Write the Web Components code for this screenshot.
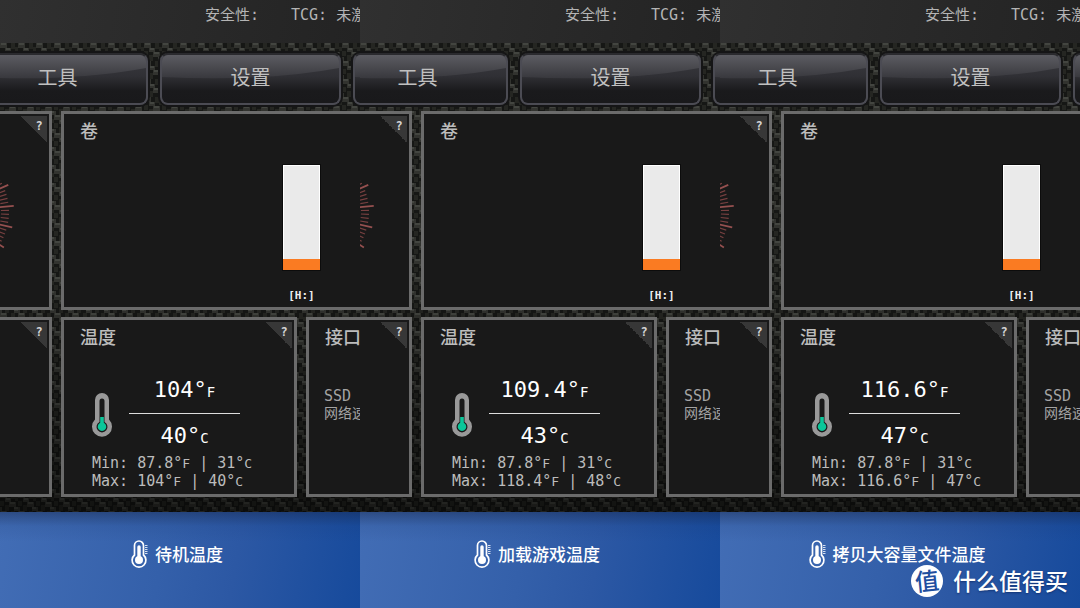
<!DOCTYPE html>
<html lang="zh-CN">
<head>
<meta charset="utf-8">
<meta name="viewport" content="width=device-width, initial-scale=1">
<title>SSD 温度对比</title>
<style>
html,body{height:100%}
body{margin:0;background:#1b1b1b;font-family:"DejaVu Sans Mono","Noto Sans CJK SC",monospace;color:#c4c4c4}
</style>
</head>
<body>
<temp-compare>
<drive-pane label="待机温度" f="104" c="40" minf="87.8" minc="31" maxf="104" maxc="40"></drive-pane>
<drive-pane label="加载游戏温度" f="109.4" c="43" minf="87.8" minc="31" maxf="118.4" maxc="48"></drive-pane>
<drive-pane label="拷贝大容量文件温度" f="116.6" c="47" minf="87.8" minc="31" maxf="116.6" maxc="47"></drive-pane>
</temp-compare>
<script>
class TempCompare extends HTMLElement{
  constructor(){
    super();
    this.attachShadow({mode:'open'}).innerHTML=`
<style>
:host{display:grid;grid-template-columns:repeat(3,minmax(0,1fr));min-height:100%;position:relative;overflow:hidden}
site-mark{position:absolute;right:12px;bottom:11px}
</style>
<slot></slot><site-mark></site-mark>`;
  }
}
customElements.define('temp-compare',TempCompare);

class SiteMark extends HTMLElement{
  constructor(){
    super();
    this.attachShadow({mode:'open'}).innerHTML=`
<style>
:host{display:flex;align-items:flex-start;height:32px;gap:10px;color:#fff;font:500 23px/30px "Noto Sans CJK SC",sans-serif;text-shadow:0 1px 2px rgba(0,20,70,.5)}
b{width:32px;height:32px;border-radius:50%;background:#fff;color:#1f4f9f;font-size:24px;line-height:30px;font-weight:500;text-align:center;text-shadow:none}
b span{display:block;transform:rotate(-6deg)}
</style>
<b><span>值</span></b><span>什么值得买</span>`;
  }
}
customElements.define('site-mark',SiteMark);

class GlossButton extends HTMLElement{
  constructor(){
    super();
    this.attachShadow({mode:'open'}).innerHTML=`
<style>
:host{display:block;flex:0 0 181px}
button{position:relative;overflow:hidden;display:block;width:100%;height:52px;padding:0 0 4px;border:2px solid #4b4b53;border-top-color:#2a2a2e;border-radius:8px;
background:linear-gradient(#3c3c41,#2f2f34 45%,#1a1a1c 75%,#19191b);box-shadow:0 0 0 2px #151516;color:#c0c0c0;font:400 20px/44px "Noto Sans CJK SC",sans-serif}
svg{position:absolute;left:0;top:0;width:100%;height:24px}
span{position:relative}
</style>
<button type="button"><svg viewBox="0 0 180 24" preserveAspectRatio="none" aria-hidden="true"><defs><linearGradient id="g" x1="0" y1="0" x2="0" y2="1"><stop offset="0" stop-color="#5c5c62"/><stop offset="1" stop-color="#38383d"/></linearGradient></defs><path d="M0 0H180V13Q105 27 0 22Z" fill="url(#g)"/></svg><span><slot></slot></span></button>`;
  }
}
customElements.define('gloss-button',GlossButton);

class InfoCard extends HTMLElement{
  constructor(){
    super();
    this.attachShadow({mode:'open'}).innerHTML=`
<style>
:host{display:block;box-sizing:border-box;position:relative;min-width:0;border:3px solid #6b6b6b;background:#191919;overflow:hidden}
h2{margin:0;padding:4px 16px 0;font:500 18px/24px "Noto Sans CJK SC",sans-serif;color:#bcbcbc;white-space:nowrap}
button{position:absolute;right:2px;top:2px;width:27px;height:27px;padding:0 4px 8px 15px;border:0;background:linear-gradient(225deg,#373737 50%,transparent 50%);color:#d4d4d4;font:700 12px/16px "DejaVu Sans Mono",monospace}
</style>
<h2></h2><button type="button" aria-label="帮助">?</button><slot></slot>`;
  }
  connectedCallback(){
    const h=this.shadowRoot.querySelector('h2');
    if(this.hasAttribute('heading'))h.textContent=this.getAttribute('heading');else h.remove();
    if(this.hasAttribute('nohelp'))this.shadowRoot.querySelector('button').remove();
  }
}
customElements.define('info-card',InfoCard);

class DialTicks extends HTMLElement{
  constructor(){
    super();
    let lines='';
    for(let i=-2;i<=15;i++){
      const major=i%5===0,a=(-23.9+i*3.72)*Math.PI/180,r0=major?52:54,r1=major?67:62;
      lines+=`<path d="M${-53+r0*Math.cos(a)} ${51+r0*Math.sin(a)}L${-53+r1*Math.cos(a)} ${51+r1*Math.sin(a)}" stroke="${major?'#95504f':'#784040'}" stroke-width="${major?1.7:1.2}"/>`;
    }
    this.attachShadow({mode:'open'}).innerHTML=`<style>:host{display:block}svg{display:block}</style><svg width="20" height="100" viewBox="0 0 20 100" aria-hidden="true">${lines}</svg>`;
  }
}
customElements.define('dial-ticks',DialTicks);

class VolumeBar extends HTMLElement{
  constructor(){
    super();
    this.attachShadow({mode:'open'}).innerHTML=`
<style>
:host{display:flex;flex-direction:column;align-items:center;width:37px}
.bar{display:flex;flex-direction:column;width:37px;height:105px;outline:1px solid #0c0c0c}
.free{flex:1;background:#eaeaea;border:1px solid #fff;border-bottom:0}
.used{height:11px;background:#fa7b22}
span{margin-top:18px;font:700 11px/16px "DejaVu Sans Mono",monospace;color:#eee;white-space:nowrap}
</style>
<div class="bar"><div class="free"></div><div class="used"></div></div><span><slot></slot></span>`;
  }
}
customElements.define('volume-bar',VolumeBar);

class TempReadout extends HTMLElement{
  constructor(){super();this.attachShadow({mode:'open'})}
  connectedCallback(){
    const v=n=>this.getAttribute(n);
    this.shadowRoot.innerHTML=`
<style>
:host{display:block;padding:27px 0 0 28px;white-space:nowrap}
.now{display:flex;align-items:center;gap:17px}
.vals{width:111px;text-align:center;color:#fff;font-size:22px;line-height:30px;display:flex;flex-direction:column;align-items:center}
.vals div{height:30px}
.f{padding-bottom:8px}
.c{border-top:1px solid #ddd;width:100%;padding-top:7px}
.now small{font-size:14px}
.range{margin-top:3px;padding-left:0;font-size:15px;line-height:18px;color:#bcbcbc}
.range small{font-size:13px}
p{margin:0;height:18px}
svg{flex:none;margin-top:4px}
</style>
<div class="now"><svg width="20" height="46" viewBox="0 0 20 46" aria-hidden="true"><path d="M10 1a7 7 0 0 1 7 7v19.500a10 10 0 1 1-14 0V8a7 7 0 0 1 7-7Z" fill="#999"/><path d="M7.500 9a2.500 2.500 0 0 1 5 0v21a5.500 5.500 0 1 1-5 0Z" fill="#191919"/><path d="M8.200 25h3.600v5.800a4.300 4.300 0 1 1-3.600 0Z" fill="#0bc79a"/></svg><div class="vals"><div class="f">${v('f')}°<small>F</small></div><div class="c">${v('c')}°<small>C</small></div></div></div>
<div class="range"><p>Min: ${v('minf')}°<small>F</small> | ${v('minc')}°<small>C</small></p><p>Max: ${v('maxf')}°<small>F</small> | ${v('maxc')}°<small>C</small></p></div>`;
  }
}
customElements.define('temp-readout',TempReadout);

class PaneCaption extends HTMLElement{
  constructor(){
    super();
    this.attachShadow({mode:'open'}).innerHTML=`
<style>
:host{display:flex;flex:1 0 96px;box-sizing:border-box;justify-content:center;gap:7px;padding:28px 6px 0 0;color:#fff;font:500 17px/28px "Noto Sans CJK SC",sans-serif;
background:linear-gradient(rgba(20,35,70,.45),rgba(20,50,110,.12) 14px,transparent 30px),linear-gradient(100deg,#426db5 0%,#3460aa 45%,#2c58a4 65%,#164a9c 100%)}
</style>
<svg width="17" height="28" viewBox="0 0 17 28" fill="none" stroke="#fff" aria-hidden="true"><path d="M3.500 15V5.500a4.500 4.500 0 0 1 9 0V15a6.900 6.900 0 1 1-9 0Z" stroke-width="1.700"/><circle cx="8" cy="20" r="4" fill="#fff" stroke="none"/><path d="M8 7v12" stroke-width="3.400" stroke-linecap="round"/><path d="M14 5.500h2.500M14 7.500h2.500M14 9.500h2.500M14 11.500h2.500M14 13.500h2.500" stroke-width=".8"/></svg><span><slot></slot></span>`;
  }
}
customElements.define('pane-caption',PaneCaption);

class DrivePane extends HTMLElement{
  constructor(){super();this.attachShadow({mode:'open'})}
  connectedCallback(){
    const attrs=['f','c','minf','minc','maxf','maxc'].map(n=>`${n}="${this.getAttribute(n)}"`).join(' ');
    this.shadowRoot.innerHTML=`
<style>
:host{display:flex;flex-direction:column;min-width:0;overflow:hidden}
header{display:flex;height:43px;box-sizing:border-box;padding:5px 0 0 205px;font-size:15px;line-height:20px;color:#b4b4b4;background:linear-gradient(100deg,#303030,#232323);white-space:nowrap}
header span{flex:0 0 86px}
.weave{padding:10px 0 15px;background-color:#171816;background-image:
linear-gradient(rgba(0,0,0,0) 50%,rgba(0,0,0,.5)),
url("data:image/svg+xml,%3Csvg xmlns='http://www.w3.org/2000/svg' width='18' height='18'%3E%3Cpath fill='%23161715' d='M0 0h18v18H0z'/%3E%3Cpath fill='%2332332f' d='M0 0h7v5H0zM5 5h6v4H5zM9 9h7v5H9zM14 14h4v4h-4zM0 14h2v4H0z'/%3E%3Cpath fill='%23434540' d='M1 0h5v2H1zM6 5h4v2H6zM10 9h5v2h-5zM14 14h4v2h-4z'/%3E%3Cpath fill='%23252622' d='M11 0h4v6h-4zM0 8h4v5H0zM5 12h4v6H5zM15 4h3v4h-3z'/%3E%3C/svg%3E")}
nav{display:flex;gap:12px;margin-left:-33px}
.cards{display:flex;gap:9px;margin-top:6px}
.cards+.cards{margin-top:7px}
.stub{flex:0 0 52px;border-left:0}
.vol{flex:1 0 auto;border-right:0}
.tall{height:199px}
.low{height:180px}
.temp{flex:0 0 236px}
.iface{flex:1 1 0;border-right:0}
dial-ticks{margin-top:47px}
volume-bar{margin:23px 0 0 219px}
.rows{margin:40px 0 0 15px;font-size:15px;line-height:16px;white-space:nowrap;color:#a4a4a4}
.rows p{margin:0}
.rows .net{font:14px/16px "Noto Sans CJK SC",sans-serif}
</style>
<header><span>安全性:</span><span>TCG: 未激</span></header>
<div class="weave">
<nav><gloss-button>工具</gloss-button><gloss-button>设置</gloss-button><gloss-button></gloss-button></nav>
<div class="cards"><info-card class="stub tall"><dial-ticks></dial-ticks></info-card><info-card class="vol tall" heading="卷" nohelp><volume-bar>[H:]</volume-bar></info-card></div>
<div class="cards"><info-card class="stub low"></info-card><info-card class="temp low" heading="温度"><temp-readout ${attrs}></temp-readout></info-card><info-card class="iface low" heading="接口" nohelp><div class="rows"><p>SSD</p><p class="net">网络速</p></div></info-card></div>
</div>
<pane-caption>${this.getAttribute('label')}</pane-caption>`;
  }
}
customElements.define('drive-pane',DrivePane);
</script>
</body>
</html>
